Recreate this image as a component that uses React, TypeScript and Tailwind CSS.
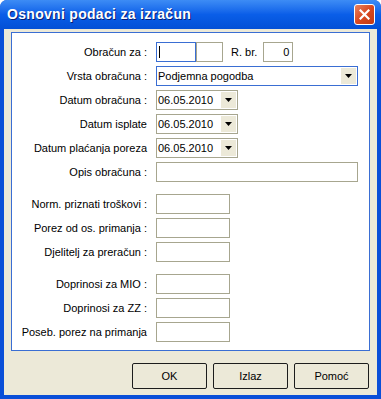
const font = { fontFamily: '"Liberation Sans", Arial, sans-serif' };

function Arrow() {
  return (
    <svg width="7" height="4" viewBox="0 0 7 4">
      <path d="M0 0h7L3.5 4z" fill="#000" />
    </svg>
  );
}

function Field({ w = "w-[74px]", focus = false, children }: { w?: string; focus?: boolean; children?: React.ReactNode }) {
  return (
    <div
      className={`${w} h-[20px] border bg-white flex items-center px-[1px] text-[11px] text-black ${
        focus ? "border-[#3a6ed3]" : "border-[#a7a68f]"
      }`}
    >
      {children}
    </div>
  );
}

function Combo({ w, focus = false, value }: { w: string; focus?: boolean; value: string }) {
  return (
    <div
      className={`${w} h-[20px] border bg-white flex items-stretch p-[1px] text-[11px] text-black ${
        focus ? "border-[#3a6ed3]" : "border-[#a7a68f]"
      }`}
    >
      <div className="flex-1 flex items-center leading-none">{value}</div>
      <div className="w-[15px] bg-[#ece9d8] flex items-center justify-center">
        <Arrow />
      </div>
    </div>
  );
}

function Row({ label, children, className = "" }: { label: string; children: React.ReactNode; className?: string }) {
  return (
    <div className={`flex items-center h-[20px] ${className}`}>
      <div className="w-[135px] text-right text-[11px] text-black whitespace-nowrap">{label}</div>
      <div className="ml-[9px] flex items-center">{children}</div>
    </div>
  );
}

function Btn({ label }: { label: string }) {
  return (
    <button className="w-[75px] h-[26px] border border-[#1c1c1c] rounded-[2px] bg-[#ece9d8] text-[11px] text-black">
      {label}
    </button>
  );
}

export default function App() {
  return (
    <div className="w-[381px] h-[399px] flex flex-col bg-[#0a4fd8] rounded-t-[7px] overflow-hidden" style={font}>
      {/* title bar */}
      <div className="h-[29px] shrink-0 flex items-center justify-between pl-[7px] pr-[6px] bg-gradient-to-b from-[#3d8cf5] via-[#0a5ee8] to-[#0350d6]">
        <span
          className="text-white font-bold text-[14px] tracking-[0.3px]"
          style={{ textShadow: "1px 1px 0 #0a1e73" }}
        >
          Osnovni podaci za izračun
        </span>
        <div className="w-[21px] h-[21px] rounded-[3px] border border-white bg-gradient-to-br from-[#e8825e] via-[#d9481f] to-[#c23a14] flex items-center justify-center">
          <svg width="11" height="11" viewBox="0 0 11 11">
            <path d="M1.5 1.5l8 8M9.5 1.5l-8 8" stroke="#fff" strokeWidth="2.2" strokeLinecap="square" />
          </svg>
        </div>
      </div>

      {/* body */}
      <div className="flex-1 mx-[4px] mb-[4px] bg-[#ece9d8] flex flex-col pt-[3px] px-[7px]">
        <div className="h-[319px] border border-[#3a6ed3] bg-white pt-[9px] flex flex-col gap-[4px]">
          <Row label="Obračun za :">
            <Field w="w-[40px]" focus>
              <div className="w-[1px] h-[12px] bg-black ml-[1px]" />
            </Field>
            <Field w="w-[27px]" />
            <span className="text-[11px] ml-[8px] mr-[6px]">R. br.</span>
            <Field w="w-[30px]">
              <span className="w-full text-right pr-[2px]">0</span>
            </Field>
          </Row>
          <Row label="Vrsta obračuna :">
            <Combo w="w-[202px]" focus value="Podjemna pogodba" />
          </Row>
          <Row label="Datum obračuna :">
            <Combo w="w-[82px]" value="06.05.2010" />
          </Row>
          <Row label="Datum isplate">
            <Combo w="w-[82px]" value="06.05.2010" />
          </Row>
          <Row label="Datum plaćanja poreza">
            <Combo w="w-[82px]" value="06.05.2010" />
          </Row>
          <Row label="Opis obračuna :">
            <Field w="w-[202px]" />
          </Row>
          <Row label="Norm. priznati troškovi :" className="mt-[8px]">
            <Field />
          </Row>
          <Row label="Porez od os. primanja :">
            <Field />
          </Row>
          <Row label="Djelitelj za preračun :">
            <Field />
          </Row>
          <Row label="Doprinosi za MIO :" className="mt-[8px]">
            <Field />
          </Row>
          <Row label="Doprinosi za ZZ :">
            <Field />
          </Row>
          <Row label="Poseb. porez na primanja">
            <Field />
          </Row>
        </div>
        <div className="mt-[12px] flex justify-end gap-[6px] pr-[1px]">
          <Btn label="OK" />
          <Btn label="Izlaz" />
          <Btn label="Pomoć" />
        </div>
      </div>
    </div>
  );
}
